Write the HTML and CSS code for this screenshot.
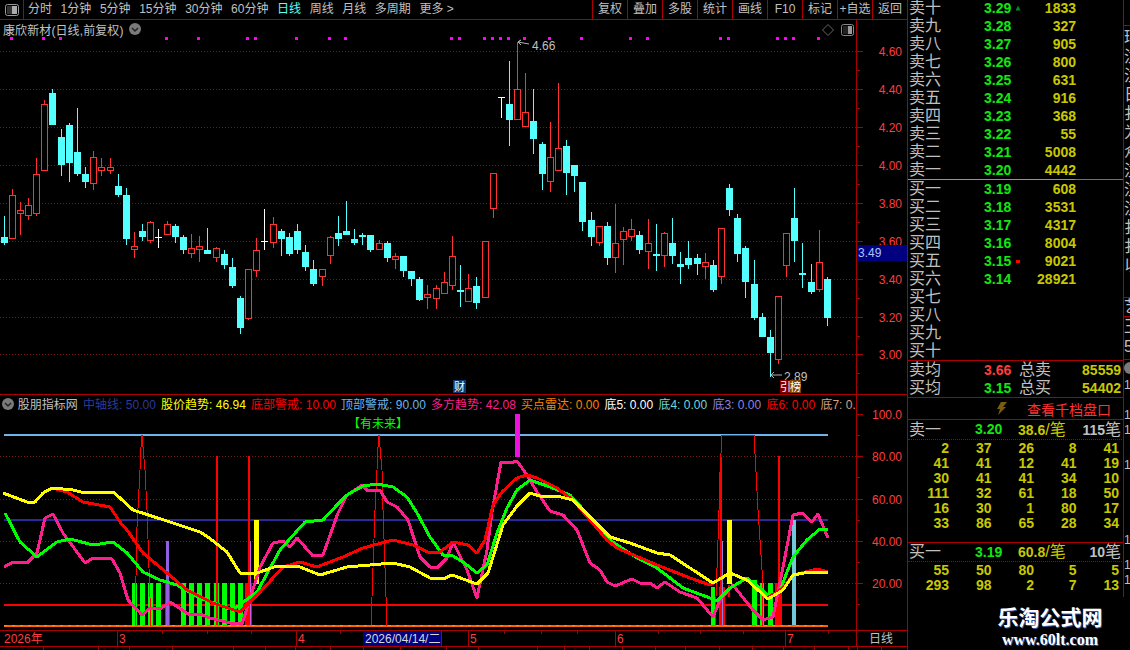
FILE: index.html
```html
<!DOCTYPE html>
<html>
<head>
	<meta charset="UTF-8">
	<title>康欣新材 日线</title>
	<link rel="stylesheet" href="styles.css">
</head>
<body>
<div class="screen">
	<div class="left">
		<div class="toolbar">
			<div class="toggle-box">
				<svg width="14" height="12" viewBox="0 0 14 12"><rect x="0.5" y="0.5" width="13" height="11" rx="2" fill="none" stroke="#999"/><rect x="2" y="2" width="5" height="8" fill="#333"/><rect x="7" y="2" width="5" height="8" fill="#aaa"/></svg>
			</div>
			<div class="periods">
				<span>分时</span><span>1分钟</span><span>5分钟</span><span>15分钟</span><span>30分钟</span><span>60分钟</span>
				<span class="active">日线</span><span>周线</span><span>月线</span><span>多周期</span><span>更多 &gt;</span>
			</div>
			<div class="tools">
				<span>复权</span><span>叠加</span><span>多股</span><span>统计</span><span>画线</span><span>F10</span><span>标记</span><span>+自选</span><span>返回</span>
			</div>
		</div>

		<div class="pane price-pane">
			<svg id="price" width="907" height="374" viewBox="0 20 907 374"></svg>
			<div class="pane-title">
				<span>康欣新材(日线,前复权)</span>
				<svg class="chev" width="12" height="12" viewBox="0 0 12 12"><circle cx="6" cy="6" r="6" fill="#7a7a7a"/><path d="M3 5 L6 8 L9 5" fill="none" stroke="#222" stroke-width="1.5"/></svg>
			</div>
			<div class="pane-icons">
				<svg width="12" height="12" viewBox="0 0 12 12"><path d="M6 0.5 L11.5 6 L6 11.5 L0.5 6 Z" fill="none" stroke="#666"/></svg>
				<svg width="13" height="12" viewBox="0 0 13 12"><rect x="0.5" y="0.5" width="12" height="11" rx="2" fill="none" stroke="#888"/><rect x="2" y="2" width="5" height="8" fill="#222"/><rect x="7" y="2" width="4" height="8" fill="#999"/></svg>
			</div>
		</div>

		<div class="pane ind-pane">
			<svg id="indicator" width="907" height="235" viewBox="0 395 907 235"></svg>
			<div class="legend">
				<svg class="chev" width="12" height="12" viewBox="0 0 12 12"><circle cx="6" cy="6" r="6" fill="#7a7a7a"/><path d="M3 5 L6 8 L9 5" fill="none" stroke="#222" stroke-width="1.5"/></svg>
				<span class="c-gray">股朋指标网</span>
				<span class="c-navy">中轴线: 50.00</span>
				<span class="c-yellow">股价趋势: 46.94</span>
				<span class="c-red">底部警戒: 10.00</span>
				<span class="c-sky">顶部警戒: 90.00</span>
				<span class="c-pink">多方趋势: 42.08</span>
				<span class="c-orange">买点雷达: 0.00</span>
				<span class="c-white">底5: 0.00</span>
				<span class="c-teal">底4: 0.00</span>
				<span class="c-violet">底3: 0.00</span>
				<span class="c-red">底6: 0.00</span>
				<span class="c-salmon">底7: 0.00</span>
			</div>
		</div>

		<svg id="timeline" class="timeline" width="907" height="16" viewBox="0 631 907 15"></svg>
		<svg id="tabs" class="tabs" width="907" height="4" viewBox="0 647 907 3"></svg>
	</div>

	<div class="book">
		<div class="rows" id="sell"></div>
		<div class="rows buy" id="buy"></div>

		<div class="summary">
			<div class="sum-row"><span class="lbl">卖均</span><b class="c-red2">3.66</b><span class="lbl">总卖</span><b class="vol">85559</b></div>
			<div class="sum-row"><span class="lbl">买均</span><b class="green">3.15</b><span class="lbl">总买</span><b class="vol">54402</b></div>
		</div>

		<div class="more">
			<svg width="11" height="13" viewBox="0 0 11 13"><path d="M5 0 L11 0 L7 5 L10 5 L2 13 L4 7 L1 7 Z" fill="#7a5c10"/></svg>
			<span>查看千档盘口</span>
		</div>

		<div class="tick-head"><span class="lbl">卖一</span><b class="green">3.20</b><span class="avg"><b>38.6</b>/笔</span><span class="cnt"><b>115</b>笔</span></div>
		<div class="ticks" id="ask"></div>
		<div class="tick-head second"><span class="lbl">买一</span><b class="green">3.19</b><span class="avg"><b>60.8</b>/笔</span><span class="cnt"><b>10</b>笔</span></div>
		<div class="ticks" id="bid"></div>

		<div class="watermark">
			<div class="wm-name">乐淘公式网</div>
			<div class="wm-url">www.60lt.com</div>
		</div>
	</div>

	<div class="side">
		<div class="side-a">环<br>注<br>注<br>日<br>扌<br>为<br>众<br>注</div>
		<div class="side-b">注<br>注<br>扌<br>扌<br>以</div>
		<div class="side-c">艺</div>
		<div class="side-d">王<br>5</div>
		<div class="side-e">
			<svg width="12" height="12" viewBox="0 0 12 12"><circle cx="6" cy="6" r="6" fill="#7a7a7a"/></svg>
			<span>1</span><span class="gap1">1</span><span>1</span><span class="gap2">1</span><span class="gap3">1</span><span class="gap4">1</span><span>1</span>
		</div>
	</div>
</div>
<script src="script.js"></script>
</body>
</html>
```

FILE: styles.css
```css
* {
	box-sizing: border-box;
}

html, body {
	margin: 0;
	padding: 0;
	background-color: #000;
}

body {
	font-family: "Liberation Sans", "Noto Sans CJK SC", sans-serif;
	font-size: 12px;
	color: #c0c0c0;
}

.screen {
	display: flex;
	width: 1130px;
	height: 650px;
	overflow: hidden;
}

svg {
	display: block;
}

/* left column */
.left {
	width: 908px;
	height: 650px;
	border-right: 1px solid #aa0000;
}

.toolbar {
	display: flex;
	align-items: center;
	height: 20px;
	border-bottom: 1px solid #aa0000;
}

.toggle-box {
	display: flex;
	align-items: center;
	justify-content: center;
	width: 24px;
	height: 19px;
	border-right: 1px solid #aa0000;
}

.periods {
	display: flex;
	gap: 8.6px;
	padding-left: 4px;
	line-height: 19px;
}

.periods .active {
	color: #54ffff;
}

.tools {
	display: flex;
	margin-left: auto;
	height: 19px;
}

.tools span {
	width: 35px;
	border-left: 1px solid #aa0000;
	text-align: center;
	line-height: 19px;
	white-space: nowrap;
}

.pane {
	position: relative;
}

.price-pane {
	height: 374px;
}

.ind-pane {
	height: 236px;
	border-top: 1px solid #aa0000;
}

.pane-title {
	position: absolute;
	top: 0;
	left: 3px;
	display: flex;
	align-items: center;
	gap: 5px;
	height: 18px;
	letter-spacing: 0.1px;
}

.pane-icons {
	position: absolute;
	top: 4px;
	left: 822px;
	display: flex;
	gap: 7px;
}

.legend {
	position: absolute;
	top: 0;
	left: 2px;
	display: flex;
	align-items: center;
	gap: 5.3px;
	width: 853px;
	height: 17px;
	overflow: hidden;
	white-space: nowrap;
}

.legend .chev {
	flex: none;
	margin-right: -1.5px;
}

.legend span {
	flex: none;
}

.c-gray { color: #c0c0c0; }
.c-navy { color: #2a3a9a; }
.c-yellow { color: #ffff00; }
.c-red { color: #ff0000; }
.c-sky { color: #6ab4f0; }
.c-pink { color: #ff1e8c; }
.c-orange { color: #ff8000; }
.c-white { color: #ffffff; }
.c-teal { color: #70d8d8; }
.c-violet { color: #9080e0; }
.c-salmon { color: #d8a080; }
.c-red2 { color: #ff3c3c; }

.timeline {
	border-top: 1px solid #aa0000;
}

.tabs {
	border-top: 1px solid #aa0000;
}

/* order book */
.book {
	position: relative;
	width: 216px;
	height: 650px;
	font-size: 14px;
}

.book:after {
	content: "";
	position: absolute;
	top: 0;
	right: 0;
	width: 1px;
	height: 597px;
	background-color: #aa0000;
}

.rows {
	margin-top: -1px;
	border-bottom: 1px solid #aa0000;
}

.rows.buy {
	margin-top: 0;
	border-bottom: 1px solid #aa0000;
}

#sell {
	border-bottom: 1px solid #c89030;
	position: relative;
}

#sell:after {
	content: "";
	position: absolute;
	left: 167px;
	right: 0;
	bottom: -1px;
	height: 1px;
	background-color: #3a80c0;
}

.row {
	display: grid;
	grid-template-columns: 75px 31px 6px 55px;
	height: 18px;
	line-height: 18px;
	padding-left: 1px;
}

.lbl {
	font-size: 16px;
	color: #c0c0c0;
}

.green {
	color: #10e810;
}

.vol {
	color: #c8c800;
	text-align: right;
}

.mark {
	align-self: center;
	justify-self: center;
	width: 4px;
	height: 3px;
	background-color: #ff0000;
}

.mark.up {
	width: 5px;
	height: 5px;
	background-color: #008a20;
	clip-path: polygon(50% 0, 100% 100%, 0 100%);
}

.summary {
	height: 37px;
	border-bottom: 1px solid #aa0000;
}

.sum-row {
	display: grid;
	grid-template-columns: 75px 35px 40px 1fr;
	height: 18px;
	line-height: 18px;
	padding: 0 3px 0 1px;
}

.more {
	display: flex;
	align-items: center;
	height: 22px;
	padding-left: 88px;
	border-bottom: 1px solid #aa0000;
	font-size: 14px;
	color: #ff3030;
}

.more span {
	margin-left: 20px;
}

.tick-head {
	display: grid;
	grid-template-columns: 66px 43px 1fr auto;
	height: 20px;
	line-height: 19px;
	padding: 0 3px 0 1px;
	border-bottom: 1px dotted #aa0000;
}

.tick-head.second {
	border-top: 1px solid #aa0000;
	height: 20px;
	line-height: 18px;
}

.avg {
	color: #c8c800;
	font-size: 16px;
}

.avg b, .cnt b {
	font-size: 14px;
}

.cnt {
	font-size: 16px;
	color: #c0c0c0;
}

.ticks {
	display: grid;
	grid-template-columns: 41px repeat(4, 42.5px);
	grid-auto-rows: 15px;
	line-height: 15px;
	padding-top: 1px;
	padding-bottom: 11px;
}

.ticks b {
	color: #c8c800;
	text-align: right;
}

.watermark {
	position: absolute;
	left: 88px;
	top: 605px;
	width: 108px;
	text-align: center;
	color: #fff;
	font-weight: bold;
	text-shadow: 1px 1px 0 #3050a0;
}

.wm-name {
	font-size: 21px;
	line-height: 26px;
}

.wm-url {
	font-family: "Liberation Serif", serif;
	font-size: 16px;
	line-height: 17px;
}

/* clipped column at the window edge */
.side {
	width: 6px;
	height: 650px;
	overflow: hidden;
	font-size: 16px;
	line-height: 19px;
	white-space: nowrap;
}

.side-a {
	height: 155px;
	margin-top: 25px;
	padding-top: 2px;
	border-top: 1px solid #aa0000;
}

.side-b {
	height: 117px;
}

.side-c {
	height: 20px;
	border-top: 1px solid #aa0000;
	border-bottom: 1px solid #aa0000;
	line-height: 18px;
}

.side-d {
	height: 43px;
	line-height: 20px;
	border-bottom: 1px solid #aa0000;
}

.side-e {
	display: flex;
	flex-direction: column;
	font-size: 12px;
	line-height: 15px;
	padding-top: 2px;
}

.side-e svg {
	margin-bottom: 4px;
}

.gap1 { margin-top: 15px; }
.gap2 { margin-top: 20px; }
.gap3 { margin-top: 60px; }
.gap4 { margin-top: 10px; }
```

FILE: script.js
```js
// candles: x, high, low, body top, body bottom, type (c = down, r = up, w = doji)
var candles = [
	[4,216,245,237,243,'c'],[12,189,238,195,238,'r'],[20,202,235,210,213,'r'],[28,198,220,205,215,'r'],
	[36,158,216,174,213,'r'],[44,100,170,104,170,'r'],[52,89,125,93,125,'c'],[61,129,176,137,165,'c'],
	[69,123,182,125,163,'c'],[77,108,176,152,174,'c'],[85,167,188,174,182,'c'],[93,151,190,157,183,'r'],
	[101,158,176,167,170,'r'],[110,158,174,167,170,'r'],[118,174,197,186,195,'c'],[126,188,245,195,239,'c'],
	[134,232,258,246,249,'r'],[142,224,241,231,237,'c'],[150,221,243,222,240,'r'],[158,229,248,237,238,'w'],
	[167,221,234,224,234,'r'],[175,224,243,226,237,'c'],[183,235,254,237,250,'c'],[191,234,258,248,253,'r'],
	[199,236,262,246,249,'r'],[207,228,254,250,254,'c'],[216,247,262,248,257,'r'],[224,250,269,254,265,'c'],
	[232,258,288,267,286,'c'],[240,296,334,298,328,'c'],[248,269,320,269,318,'r'],[256,238,277,250,270,'r'],
	[264,209,250,241,242,'w'],[273,217,248,224,242,'r'],[281,229,256,231,239,'c'],[289,233,256,237,254,'c'],
	[297,224,254,231,250,'c'],[305,245,271,252,267,'c'],[313,260,286,269,284,'c'],[322,269,286,269,276,'r'],
	[330,236,264,237,255,'r'],[338,216,246,233,239,'c'],[346,201,235,231,235,'c'],[354,229,245,239,243,'c'],
	[362,233,245,235,237,'c'],[370,235,252,235,250,'c'],[379,240,250,243,249,'r'],[387,241,262,243,258,'c'],
	[395,253,269,256,259,'r'],[403,256,277,256,271,'c'],[411,271,286,271,279,'c'],[419,277,301,279,300,'c'],
	[427,285,309,294,297,'r'],[436,285,309,288,298,'r'],[444,272,294,282,293,'r'],[452,236,290,256,285,'r'],
	[460,265,307,290,292,'c'],[468,274,301,288,301,'r'],[476,277,309,286,303,'c'],[485,241,297,241,297,'r'],
	[493,173,218,173,208,'r'],[509,61,146,104,120,'c'],[517,42,119,89,119,'r'],[525,73,126,112,126,'r'],
	[533,89,154,121,139,'c'],[542,142,190,144,174,'c'],[550,122,192,157,181,'r'],[558,83,170,148,170,'r'],
	[566,140,195,146,173,'c'],[574,165,192,165,176,'c'],[582,182,231,182,222,'c'],[591,212,246,220,237,'c'],
	[599,226,246,226,242,'r'],[607,222,265,226,258,'c'],[615,204,273,243,257,'r'],[623,227,265,231,239,'r'],
	[631,219,241,229,236,'r'],[639,231,254,235,250,'c'],[648,219,269,243,251,'r'],[656,224,271,254,256,'c'],
	[664,232,267,233,255,'r'],[672,218,264,243,256,'c'],[680,252,284,264,267,'c'],[688,241,269,258,265,'c'],
	[697,254,275,258,264,'c'],[705,253,279,262,266,'r'],[713,260,292,265,290,'c'],[721,228,284,228,276,'r'],
	[729,184,216,188,210,'c'],[737,214,262,218,254,'c'],[745,246,298,248,282,'c'],[754,260,320,284,318,'c'],
	[762,313,337,317,337,'c'],[770,330,377,337,353,'c'],[778,296,364,296,359,'r'],[786,233,277,233,265,'r'],
	[794,188,262,218,241,'c'],[802,243,288,273,275,'c'],[811,264,294,282,292,'c'],[819,230,292,262,289,'r'],
	[827,277,326,279,318,'c']
];
var dots = [11,43,60,166,198,247,255,296,329,345,451,459,484,492,500,508,524,549,581,630,647,720,728,777,785,793,818];

var pink = [[4,567],[13,562],[27,563],[37,553],[45,518],[53,514],[63,533],[85,563],[93,558],[112,559],[120,573],[128,600],[142,615],[150,608],[160,609],[170,602],[190,615],[200,614],[210,618],[230,623],[242,624],[260,567],[273,543],[283,541],[290,547],[297,538],[313,556],[323,555],[338,513],[347,495],[362,485],[368,491],[380,490],[387,502],[397,507],[408,520],[420,557],[430,567],[437,568],[447,558],[453,542],[467,570],[477,598],[487,550],[492,512],[501,462],[510,463],[517,461],[527,475],[537,492],[550,511],[563,515],[577,530],[590,563],[600,570],[607,582],[615,586],[632,579],[640,583],[650,583],[657,588],[665,582],[680,592],[697,598],[713,617],[720,600],[733,585],[753,610],[763,620],[773,617],[783,567],[793,515],[802,513],[812,522],[818,514],[828,538]];
var green = [[5,513],[20,542],[37,557],[57,542],[70,539],[93,545],[113,542],[127,553],[143,572],[160,580],[177,585],[200,598],[233,610],[257,592],[280,550],[305,522],[323,520],[337,505],[347,495],[363,486],[377,484],[393,487],[407,497],[417,513],[430,537],[443,555],[453,556],[463,562],[477,573],[487,565],[497,533],[507,508],[517,490],[530,480],[550,487],[570,495],[590,517],[610,540],[637,558],[657,568],[683,588],[710,598],[717,601],[730,588],[747,578],[760,588],[770,598],[780,590],[793,557],[807,540],[820,529],[828,529]];
var red = [[52,488],[67,492],[83,502],[110,507],[120,522],[127,530],[143,553],[167,573],[187,590],[213,603],[240,612],[260,592],[283,567],[300,562],[317,567],[343,557],[363,548],[393,540],[413,545],[430,553],[440,552],[453,542],[468,545],[477,553],[485,540],[493,505],[502,492],[517,478],[527,475],[537,478],[557,488],[573,500],[590,520],[607,540],[617,548],[657,565],[690,578],[710,585],[730,573],[747,580],[767,598],[783,588],[793,575],[817,569],[828,572]];
var yellow = [[3,493],[27,502],[35,502],[43,493],[52,488],[73,490],[85,493],[113,492],[120,498],[133,510],[167,521],[200,532],[208,537],[227,552],[240,573],[257,573],[277,566],[300,567],[320,575],[347,567],[393,563],[410,567],[430,578],[443,579],[452,575],[477,584],[488,573],[503,525],[517,506],[530,493],[543,497],[557,496],[573,500],[590,517],[610,537],[630,543],[657,553],[670,555],[713,583],[730,573],[747,580],[768,599],[783,590],[793,575],[810,572],[828,573]];

function rect(x, y, w, h, fill) {
	return '<rect x="' + x + '" y="' + y + '" width="' + w + '" height="' + h + '" fill="' + fill + '"/>';
}

function text(x, y, str, fill, anchor, size) {
	return '<text x="' + x + '" y="' + y + '" fill="' + fill + '" text-anchor="' + (anchor || 'start') + '" font-size="' + (size || 12) + '">' + str + '</text>';
}

function poly(pts, color, width) {
	return '<polyline points="' + pts.join(' ') + '" fill="none" stroke="' + color + '" stroke-width="' + width + '" stroke-linejoin="round"/>';
}

function hline(y, x1, x2, color, dash) {
	return '<line x1="' + x1 + '" x2="' + x2 + '" y1="' + (y + 0.5) + '" y2="' + (y + 0.5) + '" stroke="' + color + '"' + (dash ? ' stroke-dasharray="' + dash + '"' : '') + '/>';
}

// price pane
var s = '<g shape-rendering="crispEdges">';
var axisRed = '#ff3c3c';
var priceLines = [[51,'4.60'],[89,'4.40'],[127,'4.20'],[165,'4.00'],[203,'3.80'],[241,'3.60'],[279,'3.40'],[317,'3.20'],[354,'3.00']];
priceLines.forEach(function(l) {
	s += hline(l[0], 0, 856, '#801010', '1 2');
	s += rect(857, l[0], 6, 1, '#aa0000');
	s += rect(857, l[0] + 19, 3, 1, '#aa0000');
});
s += rect(856, 20, 1, 374, '#aa0000');
dots.forEach(function(x) {
	s += rect(x - 1, 37, 3, 3, '#ff00ff');
});
candles.forEach(function(c) {
	var x = c[0];
	if (c[5] == 'c') {
		s += rect(x, c[1], 1, c[2] - c[1], '#54ffff');
		s += rect(x - 3, c[3], 7, c[4] - c[3], '#54ffff');
	} else if (c[5] == 'r') {
		s += rect(x, c[1], 1, c[3] - c[1], '#ff3232');
		s += rect(x, c[4], 1, c[2] - c[4], '#ff3232');
		s += '<rect x="' + (x - 2.5) + '" y="' + (c[3] + 0.5) + '" width="6" height="' + (c[4] - c[3]) + '" fill="#000" stroke="#ff3232"/>';
	} else {
		s += rect(x, c[1], 1, c[2] - c[1], '#fff');
		s += rect(x - 3, c[3], 7, 1, '#fff');
	}
});
s += rect(501, 97, 1, 21, '#fff') + rect(498, 97, 7, 1, '#fff');
s += '</g>';
s += poly(['529,44','518,42','521,40','518,42','521,45'], '#b0b0b0', 1);
s += text(532, 50, '4.66', '#c0c0c0');
s += poly(['782,375','771,375','774,372','771,375','774,378'], '#b0b0b0', 1);
s += text(784, 381, '2.89', '#c0c0c0');
priceLines.forEach(function(l) {
	s += text(902, l[0] + 5, l[1], axisRed, 'end');
});
s += rect(453, 380, 13, 13, '#0a3a70') + text(454, 391, '财', '#fff', 'start', 11);
s += rect(780, 380, 10, 13, '#800000') + rect(790, 380, 11, 13, '#804000');
s += text(780, 391, '引', '#fff', 'start', 11) + text(790, 391, '榜', '#fff', 'start', 11);
s += rect(857, 245, 50, 16, '#000080') + text(858, 257, '3.49', '#a8c8ff');
document.getElementById('price').innerHTML = s;

// indicator pane
var b = '<g shape-rendering="crispEdges">';
var indLines = [[414,'100.0'],[456,'80.00'],[499,'60.00'],[541,'40.00'],[583,'20.00']];
indLines.forEach(function(l) {
	if (l[0] > 420) b += hline(l[0], 0, 856, '#702010', '1 2');
	b += rect(857, l[0], 6, 1, '#aa0000');
	b += rect(857, l[0] + 21, 3, 1, '#aa0000');
});
b += rect(856, 395, 1, 235, '#aa0000');
b += rect(4, 434, 824, 2, '#6ab4f0');
b += rect(4, 519, 824, 2, '#2a2a9a');
b += rect(4, 604, 824, 2, '#ff0000');
b += rect(515, 414, 5, 43, '#f010e0');
[132,140,148,156,181,189,197,205,214,222,230,238].forEach(function(x) {
	b += rect(x, 583, 5, 43, '#00ff00');
});
b += rect(711, 587, 4, 39, '#00ff00') + rect(752, 580, 5, 46, '#00ff00') + rect(760, 583, 4, 43, '#00ff00') + rect(768, 583, 5, 43, '#00ff00');
b += rect(165, 584, 5, 42, '#ff0000') + rect(245, 583, 7, 43, '#ff0000') + rect(775, 583, 7, 43, '#ff0000') + rect(719, 587, 6, 39, '#ff0000');
b += rect(166, 541, 3, 85, '#9060e0') + rect(250, 541, 1, 85, '#c060e0') + rect(722, 541, 1, 85, '#9080e0');
b += rect(254, 520, 5, 64, '#ffff00') + rect(727, 520, 5, 64, '#ffff00');
b += rect(792, 520, 4, 106, '#70c8d8');
b += rect(216, 456, 2, 170, '#ff0000') + rect(248, 456, 2, 170, '#ff0000') + rect(720, 457, 2, 169, '#ff0000') + rect(778, 456, 2, 170, '#ff0000');
b += rect(4, 625, 824, 2, '#ff6000');
b += hline(625, 4, 828, '#6ab4f0', '3 5');
b += poly(['135,626','137,527','140,470','141,447','142,435','143,447','145,470','147,510','151,626'], '#ff0000', 1);
b += poly(['371,626','375,510','377,470','378,447','379,435','380,447','382,470','383,510','387,626'], '#ff0000', 1);
b += poly(['715,626','718,540','719,510','720,472','722,435','754,435','756,472','758,510','762,570','762,626'], '#ff0000', 1);
b += poly(['729,585','729,597'], '#ff0000', 2);
b += poly(pink, '#ff1e8c', 3);
b += poly(green, '#00ff00', 3);
b += poly(red, '#ff0000', 3);
b += poly(yellow, '#ffff00', 3);
b += '</g>';
indLines.forEach(function(l) {
	b += text(902, l[0] + 5, l[1], axisRed, 'end');
});
b += text(348, 428, '【有未来】', '#00ff00');
document.getElementById('indicator').innerHTML = b;

// time axis
var t = '<g shape-rendering="crispEdges">';
var months = [[117,'3'],[296,'4'],[468,'5'],[615,'6'],[785,'7']];
months.forEach(function(m) {
	t += rect(m[0], 631, 1, 15, '#aa0000');
});
[162,207,251,340,504,541,577,658,700,743,828].forEach(function(x) {
	t += rect(x, 631, 1, 3, '#aa0000');
});
t += rect(856, 631, 1, 15, '#aa0000');
t += rect(363, 631, 79, 15, '#000080') + rect(441, 631, 1, 15, '#aa0000');
t += '</g>';
t += text(4, 643, '2026年', axisRed);
months.forEach(function(m) {
	t += text(m[0] + 2, 643, m[1], axisRed);
});
t += text(365, 643, '2026/04/14/二', '#d8d8d8');
t += text(869, 643, '日线', '#c0c0c0');
document.getElementById('timeline').innerHTML = t;

var d = '<g shape-rendering="crispEdges">';
[43,98,129,172,233,265,295,330,363,400,446,478,537,564,589,622,655,685,719,752,783,814,848,857,881].forEach(function(x) {
	d += rect(x, 647, 1, 3, '#aa0000');
});
document.getElementById('tabs').innerHTML = d + '</g>';

// order book
var sellNames = ['卖十','卖九','卖八','卖七','卖六','卖五','卖四','卖三','卖二','卖一'];
var sellData = [['3.29',1833],['3.28',327],['3.27',905],['3.26',800],['3.25',631],['3.24',916],['3.23',368],['3.22',55],['3.21',5008],['3.20',4442]];
var buyNames = ['买一','买二','买三','买四','买五','买六','买七','买八','买九','买十'];
var buyData = [['3.19',608],['3.18',3531],['3.17',4317],['3.16',8004],['3.15',9021],['3.14',28921]];

function bookRow(name, item, mark) {
	var html = '<div class="row"><span class="lbl">' + name + '</span>';
	if (item) {
		html += '<b class="green">' + item[0] + '</b>';
		html += mark ? '<i class="mark ' + mark + '"></i>' : '<i></i>';
		html += '<b class="vol">' + item[1] + '</b>';
	}
	return html + '</div>';
}

var sellHtml = '';
sellNames.forEach(function(n, i) {
	sellHtml += bookRow(n, sellData[i], i == 0 ? 'up' : '');
});
document.getElementById('sell').innerHTML = sellHtml;

var buyHtml = '';
buyNames.forEach(function(n, i) {
	buyHtml += bookRow(n, buyData[i], i == 4 ? 'down' : '');
});
document.getElementById('buy').innerHTML = buyHtml;

function fillTicks(id, nums) {
	var html = '';
	nums.forEach(function(n) {
		html += '<b>' + n + '</b>';
	});
	document.getElementById(id).innerHTML = html;
}

fillTicks('ask', [2,37,26,8,41,41,41,12,41,19,30,41,41,34,10,111,32,61,18,50,16,30,1,80,17,33,86,65,28,34]);
fillTicks('bid', [55,50,80,5,5,293,98,2,7,13]);
```
